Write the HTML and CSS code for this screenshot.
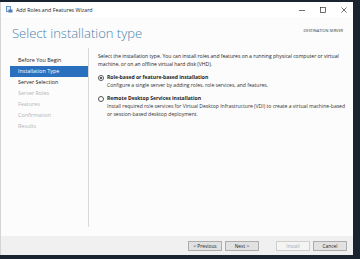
FILE: index.html
```html
<html>
<head>
<title>Add Roles and Features Wizard</title>
<link rel="stylesheet" href="styles.css">
</head>
<body>

    <div class="window">
        <div class="titlebar">
            <svg class="appicon" width="7" height="7" viewBox="0 0 7 7">
                <rect x="0.5" y="0.5" width="4" height="5" fill="#dfe9f5" stroke="#4a7fb8" stroke-width="0.8"/>
                <rect x="2.5" y="3.5" width="4" height="3" fill="#4a7fb8"/>
            </svg>
            <span class="title">Add Roles and Features Wizard</span>
            <div class="controls">
                <svg width="8" height="8" viewBox="0 0 8 8"><line x1="1" y1="4.5" x2="7" y2="4.5" stroke="#333" stroke-width="0.7"/></svg>
                <svg width="8" height="8" viewBox="0 0 8 8"><rect x="1.5" y="1.5" width="5" height="5" fill="none" stroke="#333" stroke-width="0.7"/></svg>
                <svg width="8" height="8" viewBox="0 0 8 8"><path d="M1.5 1.5 L6.5 6.5 M6.5 1.5 L1.5 6.5" stroke="#333" stroke-width="0.7"/></svg>
            </div>
        </div>

        <div class="header">
            <h1>Select installation type</h1>
            <div class="dest">DESTINATION SERVER</div>
        </div>

        <div class="main">
            <div class="nav">
                <div class="step">Before You Begin</div>
                <div class="step current">Installation Type</div>
                <div class="step">Server Selection</div>
                <div class="step off">Server Roles</div>
                <div class="step off">Features</div>
                <div class="step off">Confirmation</div>
                <div class="step off">Results</div>
            </div>
            <div class="content">
                <p class="intro">Select the installation type. You can install roles and features on a running physical computer or virtual machine, or on an offline virtual hard disk (VHD).</p>
                <div class="option">
                    <span class="radio checked"></span>
                    <div>
                        <div class="label">Role-based or feature-based installation</div>
                        <div class="desc">Configure a single server by adding roles, role services, and features.</div>
                    </div>
                </div>
                <div class="option">
                    <span class="radio"></span>
                    <div>
                        <div class="label">Remote Desktop Services installation</div>
                        <div class="desc">Install required role services for Virtual Desktop Infrastructure (VDI) to create a virtual machine-based or session-based desktop deployment.</div>
                    </div>
                </div>
            </div>
        </div>

        <div class="footer">
            <button>&lt; Previous</button>
            <button>Next &gt;</button>
            <button class="gap" disabled>Install</button>
            <button>Cancel</button>
        </div>
    </div>

</body>
</html>
```

FILE: styles.css
```css
/* desktop behind the wizard */
body {
  margin: 0;
  background: #1a2430;
  font-family: "Open Sans", "Noto Sans", sans-serif;
  color: #1e1e1e;
  overflow: hidden;
}

.window {
  margin-top: 2px;
  width: 353px;
  height: 253px;
  background: #fcfcfc;
  display: flex;
  flex-direction: column;
  border-left: 1px solid #d4d4d4;
  box-sizing: border-box;
}

.titlebar {
  height: 15px;
  background: #fff;
  display: flex;
  align-items: center;
  padding-left: 5px;
}

.appicon {
  margin-right: 3px;
}

.title {
  font-size: 5.3px;
  color: #222;
}

.controls {
  margin-left: auto;
  display: flex;
  gap: 13px;
  padding-right: 5px;
}

.header {
  height: 31px;
  display: flex;
  align-items: center;
  padding: 0 10px 0 11px;
}

h1 {
  margin: 0;
  font-size: 13px;
  font-weight: 300;
  color: #4a82ad;
  flex: 1;
}

.dest {
  font-size: 3.9px;
  color: #333;
  margin-top: -4px;
}

.main {
  flex: 1;
  display: flex;
}

.nav {
  width: 78px;
  margin-left: 9px;
  padding-top: 7px;
  border-right: 1px solid #d9d9d9;
  margin-bottom: 9px;
}

.step {
  height: 11px;
  line-height: 11px;
  font-size: 5.4px;
  padding-left: 8px;
  color: #222;
}

.step.current {
  background: #2b6fbf;
  color: #fff;
}

.step.off {
  color: #b4b4b4;
}

.content {
  flex: 1;
  padding: 4px 5px 0 9px;
  font-size: 5.1px;
  letter-spacing: -0.02px;
  line-height: 8px;
}

.intro {
  margin: 0 0 5px 0;
}

.option {
  display: flex;
  margin-bottom: 5px;
}

.radio {
  width: 4px;
  height: 4px;
  border: 0.7px solid #555;
  border-radius: 50%;
  margin: 2px 3px 0 0;
  flex: none;
  position: relative;
  background: #fff;
}

.radio.checked::after {
  content: "";
  position: absolute;
  left: 1px;
  top: 1px;
  width: 2px;
  height: 2px;
  border-radius: 50%;
  background: #222;
}

.label {
  font-weight: bold;
}

.desc {
  color: #333;
}

.footer {
  height: 19px;
  background: #f0f0f0;
  display: flex;
  align-items: center;
  justify-content: flex-end;
  padding-right: 6px;
  gap: 3px;
}

button {
  width: 34px;
  height: 10px;
  padding: 0;
  font-family: inherit;
  font-size: 4.8px;
  background: #e1e1e1;
  border: 0.7px solid #adadad;
  color: #222;
}

button.gap {
  margin-left: 14px;
}

button:disabled {
  background: #f4f4f4;
  border-color: #cfcfcf;
  color: #a8a8a8;
}
```
